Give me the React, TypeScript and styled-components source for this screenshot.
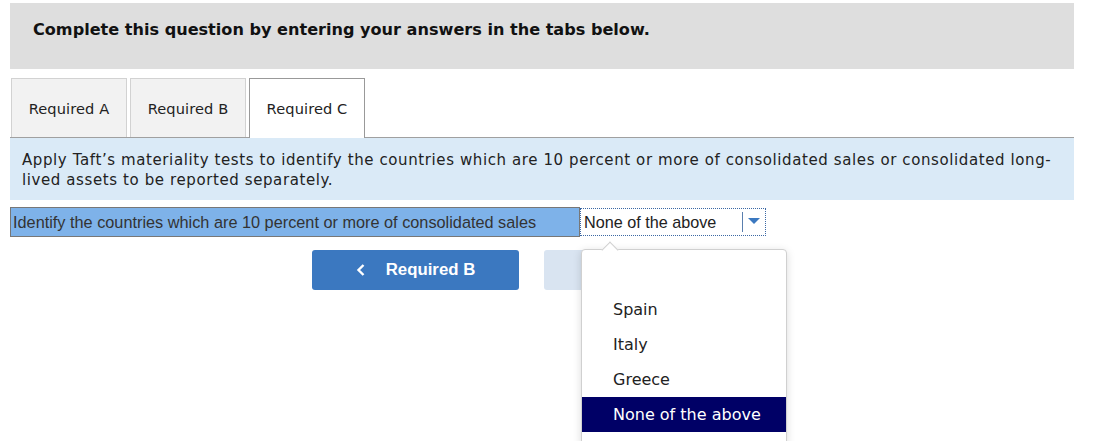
import React from "react";
import styled, { createGlobalStyle } from "styled-components";

const GlobalStyle = createGlobalStyle`
  html, body {
    margin: 0;
    padding: 0;
    height: 100%;
    background: #fff;
    overflow: hidden;
  }
  body {
    font-family: "DejaVu Sans", Verdana, sans-serif;
    color: #222;
  }
`;

const tabs = ["Required A", "Required B", "Required C"];
const options = ["", "Spain", "Italy", "Greece", "None of the above"];

const App = () => {
  return (
    <Page>
      <GlobalStyle />
      <Header>Complete this question by entering your answers in the tabs below.</Header>
      <TabBar>
        {tabs.map((t, i) => (
          <Tab key={t} active={i === 2}>
            {t}
          </Tab>
        ))}
      </TabBar>
      <Info>
        Apply Taft’s materiality tests to identify the countries which are 10 percent or more of
        consolidated sales or consolidated long-lived assets to be reported separately.
      </Info>
      <QuestionRow>
        <Label>Identify the countries which are 10 percent or more of consolidated sales</Label>
        <SelectWrap>
          <SelectBox>
            <span>None of the above</span>
            <Arrow>
              <svg width="12" height="7" viewBox="0 0 12 7">
                <path d="M0 0 L12 0 L6 6 Z" fill="#3b78c0" />
              </svg>
            </Arrow>
          </SelectBox>
          <Popup>
            <Caret />
            {options.map((o, i) => (
              <Option key={i} selected={o === "None of the above"}>
                {o}
              </Option>
            ))}
          </Popup>
        </SelectWrap>
      </QuestionRow>
      <Nav>
        <NavButton>
          <svg width="10" height="14" viewBox="0 0 10 14">
            <path d="M7.5 2 L2.5 7 L7.5 12" fill="none" stroke="#fff" strokeWidth="2.4" />
          </svg>
          Required B
        </NavButton>
        <NavButton disabled />
      </Nav>
    </Page>
  );
};

const Page = styled.div`
  width: 1064px;
  padding: 3px 0 0 10px;
`;

const Header = styled.div`
  background: #dedede;
  height: 66px;
  padding: 17px 0 0 23px;
  box-sizing: border-box;
  font-weight: bold;
  font-size: 16.1px;
  line-height: 20px;
  color: #111;
`;

const TabBar = styled.div`
  display: flex;
  gap: 3px;
  margin-top: 9px;
  padding-left: 1px;
  border-bottom: 1px solid #a0a0a0;
  height: 60px;
  box-sizing: border-box;
`;

const Tab = styled.div<{ active?: boolean }>`
  width: 116px;
  box-sizing: border-box;
  border: 1px solid ${(p) => (p.active ? "#999" : "#d2d2d2")};
  border-bottom: none;
  background: ${(p) => (p.active ? "#fff" : "#f2f2f2")};
  display: flex;
  align-items: center;
  justify-content: center;
  font-size: 14.6px;
  letter-spacing: 0.1px;
  color: #222;
  height: ${(p) => (p.active ? "60px" : "59px")};
  margin-bottom: ${(p) => (p.active ? "-1px" : "0")};
  padding-bottom: ${(p) => (p.active ? "1px" : "0")};
`;

const Info = styled.div`
  background: #daeaf7;
  padding: 12px 10px 10px 12px;
  font-size: 15px;
  letter-spacing: 0.6px;
  line-height: 20px;
  color: #222;
`;

const QuestionRow = styled.div`
  display: flex;
  align-items: center;
  margin-top: 7px;
`;

const Label = styled.div`
  width: 570px;
  height: 30px;
  box-sizing: border-box;
  border: 1px solid #777;
  background: #7eb2e9;
  font-family: "Liberation Sans", Arial, sans-serif;
  font-size: 16.3px;
  color: #333;
  padding-left: 2px;
  display: flex;
  align-items: center;
`;

const SelectWrap = styled.div`
  position: relative;
`;

const SelectBox = styled.div`
  width: 186px;
  height: 28px;
  box-sizing: border-box;
  border: 1.5px dotted #3c68a4;
  display: flex;
  align-items: center;
  justify-content: space-between;
  padding-left: 3px;
  font-family: "Liberation Sans", Arial, sans-serif;
  font-size: 16.2px;
  color: #222;
  background: #fff;
`;

const Arrow = styled.div`
  width: 22px;
  height: 20px;
  border-left: 1px solid #5a7fae;
  display: flex;
  align-items: center;
  justify-content: center;
  svg {
    margin-top: -2px;
  }
`;

const Popup = styled.div`
  position: absolute;
  left: 1px;
  top: 41px;
  width: 206px;
  padding: 7px 0 12px;
  background: #fff;
  border: 1px solid #d0d0d0;
  border-radius: 4px;
  box-shadow: 0 2px 8px rgba(0, 0, 0, 0.15);
  box-sizing: border-box;
  z-index: 2;
`;

const Caret = styled.div`
  position: absolute;
  top: -6px;
  left: 22px;
  width: 11px;
  height: 11px;
  background: #fff;
  border-left: 1px solid #d0d0d0;
  border-top: 1px solid #d0d0d0;
  transform: rotate(45deg);
`;

const Option = styled.div<{ selected?: boolean }>`
  height: 35px;
  display: flex;
  align-items: center;
  padding-left: 31px;
  font-size: 16px;
  color: ${(p) => (p.selected ? "#fff" : "#222")};
  background: ${(p) => (p.selected ? "#000066" : "transparent")};
  position: relative;
`;

const Nav = styled.div`
  display: flex;
  gap: 25px;
  margin-top: 13px;
  padding-left: 302px;
`;

const NavButton = styled.button`
  width: 207px;
  height: 40px;
  border: none;
  border-radius: 3px;
  background: ${(p) => (p.disabled ? "#d9e4f1" : "#3b78c0")};
  color: #fff;
  font-family: "Liberation Sans", Arial, sans-serif;
  font-weight: bold;
  font-size: 16.8px;
  display: flex;
  align-items: center;
  justify-content: center;
  gap: 20px;
  padding: 0;
`;

export default App;
